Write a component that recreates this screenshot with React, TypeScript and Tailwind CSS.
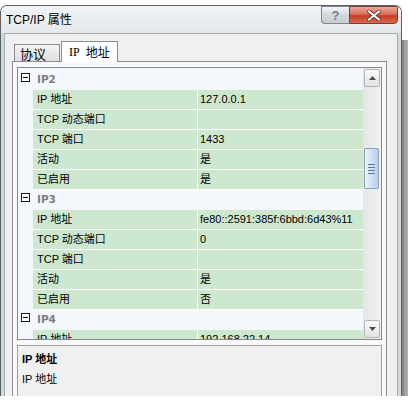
import React from "react";

type Row = { name: string; value: string };
type Group = { title: string; rows: Row[] };

const groups: Group[] = [
  {
    title: "IP2",
    rows: [
      { name: "IP 地址", value: "127.0.0.1" },
      { name: "TCP 动态端口", value: "" },
      { name: "TCP 端口", value: "1433" },
      { name: "活动", value: "是" },
      { name: "已启用", value: "是" },
    ],
  },
  {
    title: "IP3",
    rows: [
      { name: "IP 地址", value: "fe80::2591:385f:6bbd:6d43%11" },
      { name: "TCP 动态端口", value: "0" },
      { name: "TCP 端口", value: "" },
      { name: "活动", value: "是" },
      { name: "已启用", value: "否" },
    ],
  },
  {
    title: "IP4",
    rows: [{ name: "IP 地址", value: "192.168.22.14" }],
  },
];

function MinusBox() {
  return (
    <div className="w-[9px] h-[9px] border border-[#1a1a1a] bg-white flex items-center justify-center">
      <div className="w-[5px] h-px bg-black" />
    </div>
  );
}

function ScrollButton({ up }: { up: boolean }) {
  return (
    <div className="h-[18px] w-[16px] mx-px rounded-[2px] border border-[#b5b5b5] bg-[linear-gradient(180deg,#fafafa,#e2e2e2)] flex items-center justify-center">
      <svg width="7" height="4" viewBox="0 0 7 4">
        {up ? (
          <path d="M0 4 L3.5 0 L7 4 Z" fill="#4d4d4d" />
        ) : (
          <path d="M0 0 L3.5 4 L7 0 Z" fill="#4d4d4d" />
        )}
      </svg>
    </div>
  );
}

export default function App() {
  return (
    <div className="w-[408px] h-[411px] bg-white overflow-hidden flex font-['Liberation_Sans','Noto_Sans_CJK_SC',sans-serif] text-black">
      {/* window */}
      <div className="mt-[5px] w-[402px] h-[391px] shrink-0 overflow-hidden rounded-t-[7px] border border-b-0 border-[#5c6168] bg-[#d3dbd9] flex flex-col">
        {/* title bar */}
        <div className="h-[27px] shrink-0 flex items-start justify-between bg-[linear-gradient(180deg,#f2f4f6,#e4e8eb)]">
          <span className="pl-[5px] pt-[6px] text-[12px] leading-[16px]">TCP/IP 属性</span>
          <div className="flex mr-[3px] rounded-b-[4px]">
            <div className="w-[28px] h-[18px] rounded-bl-[4px] border border-r-0 border-[#7f858c] bg-[linear-gradient(180deg,#f5f6f8,#d3d8de_50%,#c7cdd4)] flex items-center justify-center">
              <span className="text-[13px] leading-none font-bold text-[#7a7f86]">?</span>
            </div>
            <div className="w-[49px] h-[18px] rounded-br-[4px] border border-[#7a3c35] bg-[linear-gradient(180deg,#eaa99b,#d8705a_45%,#c53c25_55%,#d66c50)] flex items-center justify-center">
              <svg width="14" height="11" viewBox="0 0 14 11">
                <path d="M2 1.5 L12 9.5 M12 1.5 L2 9.5" stroke="#5a2a22" strokeWidth="3.6" strokeLinecap="round" />
                <path d="M2 1.5 L12 9.5 M12 1.5 L2 9.5" stroke="#ffffff" strokeWidth="2.2" strokeLinecap="round" />
              </svg>
            </div>
          </div>
        </div>

        {/* client area */}
        <div className="flex-1 ml-[3px] w-[394px] border border-b-0 border-[#a3abb3] bg-[#f0f0f0] pt-[7px] pl-[7px]">
          {/* tabs */}
          <div className="h-[20px] flex items-end pl-[2px]">
            <div className="w-[46px] h-[17px] border border-b-0 border-[#898c95] bg-[linear-gradient(180deg,#f3f3f3,#e0e0e0)] flex items-center pl-[5px] text-[13px] leading-none font-['Noto_Sans_CJK_SC',sans-serif]">
              协议
            </div>
            <div className="relative z-10 -mb-px ml-px w-[57px] h-[21px] border border-b-0 border-[#898c95] bg-white flex items-center gap-[6px] pl-[7px] text-[12px] leading-none font-['Noto_Sans_CJK_SC',sans-serif]">
              <span className="font-['Liberation_Serif',serif]">IP</span>
              <span>地址</span>
            </div>
          </div>

          {/* tab panel */}
          <div className="w-[375px] h-[400px] border border-[#898c95] bg-[#f9f9f9] pt-[5px] pl-[4px]">
            {/* property grid */}
            <div className="w-[365px] h-[273px] border border-[#828790] bg-[#f4f7fc] flex overflow-hidden">
              <div className="flex-1 pt-[2px] overflow-hidden text-[11px]">
                {groups.map((g) => (
                  <div key={g.title}>
                    <div className="h-[20px] flex items-start">
                      <div className="w-[15px] pt-[3px] pl-[3px]">
                        <MinusBox />
                      </div>
                      <span className="pl-[4px] h-[20px] flex items-center font-bold text-[#7d7d7d] font-['DejaVu_Sans',sans-serif] text-[10.5px]">
                        {g.title}
                      </span>
                    </div>
                    {g.rows.map((r, i) => (
                      <div key={i} className="h-[20px] flex">
                        <div className="w-[15px] shrink-0" />
                        <div className="flex-1 flex border-b border-white bg-[#cde8cf]">
                          <div className="w-[165px] shrink-0 border-r border-white pl-[4px] flex items-center leading-none">
                            {r.name}
                          </div>
                          <div className="flex-1 pl-[2px] flex items-center leading-none whitespace-nowrap">
                            {r.value}
                          </div>
                        </div>
                      </div>
                    ))}
                  </div>
                ))}
              </div>

              {/* scrollbar */}
              <div className="w-[18px] shrink-0 bg-[linear-gradient(90deg,#e6e6e6,#f2f2f2)] flex flex-col pt-[1px] pb-px">
                <ScrollButton up />
                <div className="h-[61px]" />
                <div className="h-[41px] w-[15px] mx-px rounded-[2px] border border-[#8aa0bb] bg-[linear-gradient(90deg,#eef4fb,#cfe0f2_50%,#b9d0ea)] flex flex-col items-center justify-center gap-[2px]">
                  <div className="w-[7px] h-px bg-[#5d7593]" />
                  <div className="w-[7px] h-px bg-[#5d7593]" />
                  <div className="w-[7px] h-px bg-[#5d7593]" />
                  <div className="w-[7px] h-px bg-[#5d7593]" />
                </div>
                <div className="flex-1" />
                <ScrollButton up={false} />
              </div>
            </div>

            {/* description pane */}
            <div className="mt-[5px] w-[365px] h-[80px] border border-[#a0a0a0] bg-[#f0f0f0] pl-[4px] pt-[3px] text-[11px]">
              <div className="h-[20px] flex items-center font-bold leading-none">IP 地址</div>
              <div className="h-[20px] flex items-center leading-none">IP 地址</div>
            </div>
          </div>
        </div>
      </div>

      {/* background window edge at the right */}
      <div className="mt-[40px] w-[6px] h-[356px] bg-[linear-gradient(90deg,#7d7d7d,#9a9a9a_40%,#b4b4b4)]" />
    </div>
  );
}
